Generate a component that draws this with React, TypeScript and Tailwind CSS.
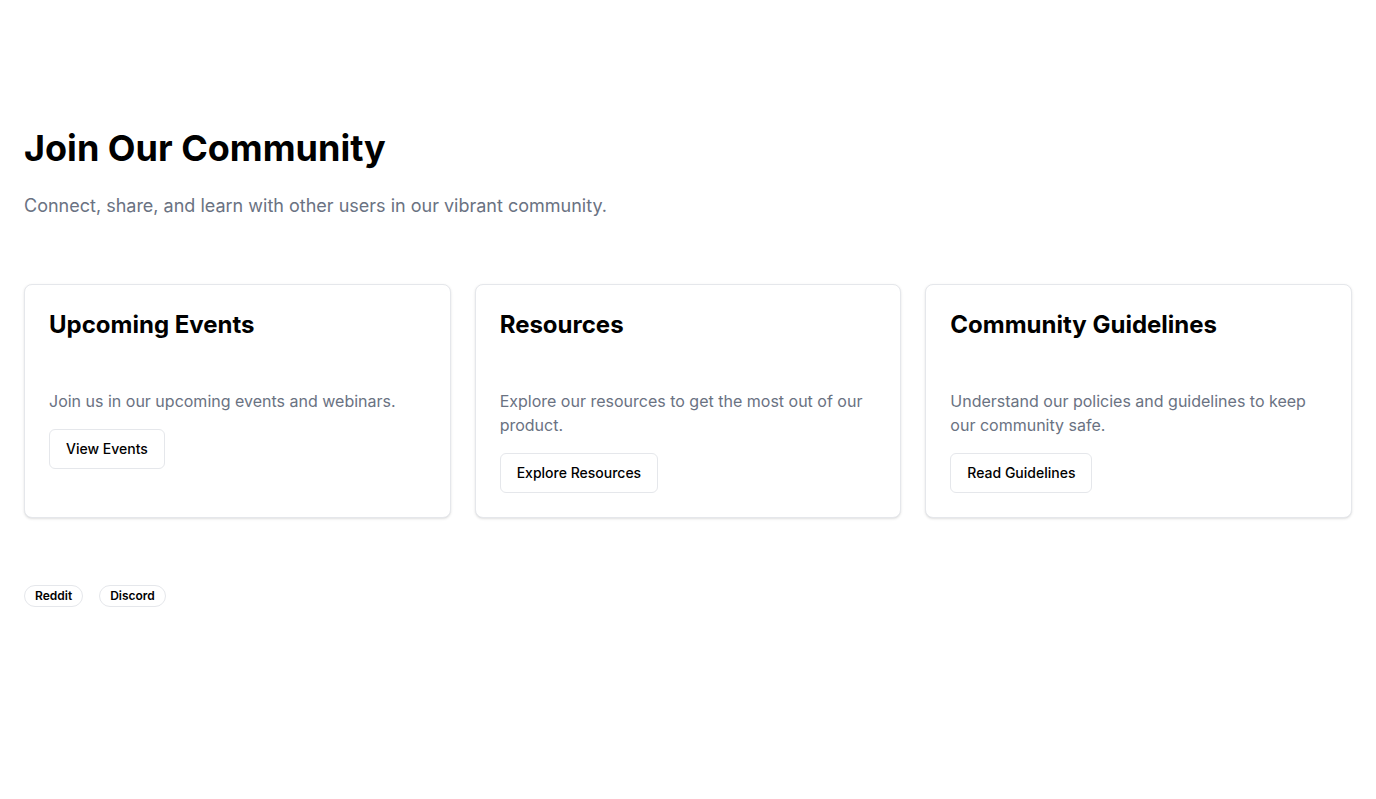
import React from "react";

const cards = [
  { title: "Upcoming Events", desc: "Join us in our upcoming events and webinars.", btn: "View Events" },
  { title: "Resources", desc: "Explore our resources to get the most out of our product.", btn: "Explore Resources" },
  { title: "Community Guidelines", desc: "Understand our policies and guidelines to keep our community safe.", btn: "Read Guidelines" },
];

export default function App() {
  return (
    <div className="min-h-[799px] bg-white px-6 pt-32 text-black" style={{ fontFamily: "Inter, 'Noto Sans', sans-serif" }}>
      <h1 className="text-4xl font-bold leading-10">Join Our Community</h1>
      <p className="mt-6 text-lg leading-7 text-gray-500">Connect, share, and learn with other users in our vibrant community.</p>
      <div className="mt-16 grid grid-cols-3 gap-6">
        {cards.map((c) => (
          <div key={c.title} className="rounded-lg border border-gray-200 bg-white p-6 shadow-sm">
            <h3 className="text-2xl font-bold leading-8">{c.title}</h3>
            <p className="mt-12 text-base leading-6 text-gray-500">{c.desc}</p>
            <button className="mt-4 h-10 rounded-md border border-gray-200 bg-white px-4 text-sm font-medium">{c.btn}</button>
          </div>
        ))}
      </div>
      <div className="mt-[67px] flex gap-4">
        <span className="rounded-full border border-gray-200 px-2.5 py-0.5 text-xs font-semibold">Reddit</span>
        <span className="rounded-full border border-gray-200 px-2.5 py-0.5 text-xs font-semibold">Discord</span>
      </div>
    </div>
  );
}
